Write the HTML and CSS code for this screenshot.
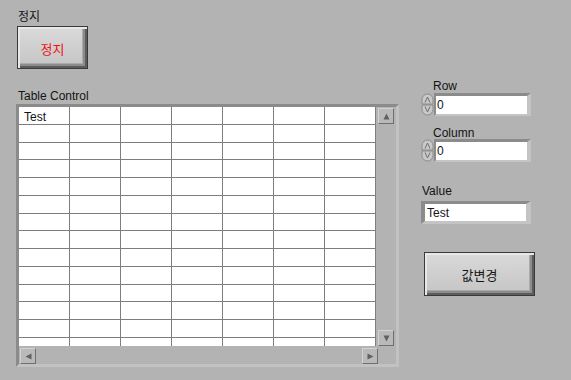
FILE: index.html
```html
<!DOCTYPE html>
<html lang="ko">
<head>
    <meta charset="UTF-8">
    <meta name="viewport" content="width=device-width, initial-scale=1.0">
    <title>Table Control</title>
    <link rel="stylesheet" href="styles.css">
</head>
<body>
    <div class="panel">
        <div class="left">
            <div class="label stop-label">정지</div>
            <button type="button" class="lv-button stop">정지</button>
            <div class="label table-label">Table Control</div>

            <div class="table-frame">
                <div class="cells">
                    <div class="cell">Test</div><div class="cell"></div><div class="cell"></div><div class="cell"></div><div class="cell"></div><div class="cell"></div><div class="cell"></div>
                    <div class="cell"></div><div class="cell"></div><div class="cell"></div><div class="cell"></div><div class="cell"></div><div class="cell"></div><div class="cell"></div>
                    <div class="cell"></div><div class="cell"></div><div class="cell"></div><div class="cell"></div><div class="cell"></div><div class="cell"></div><div class="cell"></div>
                    <div class="cell"></div><div class="cell"></div><div class="cell"></div><div class="cell"></div><div class="cell"></div><div class="cell"></div><div class="cell"></div>
                    <div class="cell"></div><div class="cell"></div><div class="cell"></div><div class="cell"></div><div class="cell"></div><div class="cell"></div><div class="cell"></div>
                    <div class="cell"></div><div class="cell"></div><div class="cell"></div><div class="cell"></div><div class="cell"></div><div class="cell"></div><div class="cell"></div>
                    <div class="cell"></div><div class="cell"></div><div class="cell"></div><div class="cell"></div><div class="cell"></div><div class="cell"></div><div class="cell"></div>
                    <div class="cell"></div><div class="cell"></div><div class="cell"></div><div class="cell"></div><div class="cell"></div><div class="cell"></div><div class="cell"></div>
                    <div class="cell"></div><div class="cell"></div><div class="cell"></div><div class="cell"></div><div class="cell"></div><div class="cell"></div><div class="cell"></div>
                    <div class="cell"></div><div class="cell"></div><div class="cell"></div><div class="cell"></div><div class="cell"></div><div class="cell"></div><div class="cell"></div>
                    <div class="cell"></div><div class="cell"></div><div class="cell"></div><div class="cell"></div><div class="cell"></div><div class="cell"></div><div class="cell"></div>
                    <div class="cell"></div><div class="cell"></div><div class="cell"></div><div class="cell"></div><div class="cell"></div><div class="cell"></div><div class="cell"></div>
                    <div class="cell"></div><div class="cell"></div><div class="cell"></div><div class="cell"></div><div class="cell"></div><div class="cell"></div><div class="cell"></div>
                    <div class="cell"></div><div class="cell"></div><div class="cell"></div><div class="cell"></div><div class="cell"></div><div class="cell"></div><div class="cell"></div>
                </div>
                <div class="vscroll">
                    <div class="sbtn">
                        <svg width="7" height="7" viewBox="0 0 7 7"><path d="M3.5 0.5 L6.5 6.5 L0.5 6.5 Z" fill="#606060"/></svg>
                    </div>
                    <div class="sbtn">
                        <svg width="7" height="7" viewBox="0 0 7 7"><path d="M0.5 0.5 L6.5 0.5 L3.5 6.5 Z" fill="#606060"/></svg>
                    </div>
                </div>
                <div class="hscroll">
                    <div class="sbtn">
                        <svg width="7" height="7" viewBox="0 0 7 7"><path d="M0.5 3.5 L6.5 0.5 L6.5 6.5 Z" fill="#606060"/></svg>
                    </div>
                    <div class="sbtn">
                        <svg width="7" height="7" viewBox="0 0 7 7"><path d="M0.5 0.5 L6.5 3.5 L0.5 6.5 Z" fill="#606060"/></svg>
                    </div>
                </div>
            </div>
        </div>

        <div class="right">
            <div class="label side-label">Row</div>
            <div class="numeric">
                <svg class="incr" width="13" height="23" viewBox="0 0 13 23">
                    <path d="M1 11 V6.5 a5.5 5.5 0 0 1 11 0 V11 Z" fill="#c8c8c8" stroke="#8a8a8a"/>
                    <path d="M1 12 V16.5 a5.5 5.5 0 0 0 11 0 V12 Z" fill="#c8c8c8" stroke="#8a8a8a"/>
                    <path d="M4 9.5 L6.5 4 L9 9.5" fill="none" stroke="#707070"/>
                    <path d="M4 13.5 L6.5 19 L9 13.5" fill="none" stroke="#707070"/>
                </svg>
                <div class="num-box">0</div>
            </div>

            <div class="label side-label column-label">Column</div>
            <div class="numeric">
                <svg class="incr" width="13" height="23" viewBox="0 0 13 23">
                    <path d="M1 11 V6.5 a5.5 5.5 0 0 1 11 0 V11 Z" fill="#c8c8c8" stroke="#8a8a8a"/>
                    <path d="M1 12 V16.5 a5.5 5.5 0 0 0 11 0 V12 Z" fill="#c8c8c8" stroke="#8a8a8a"/>
                    <path d="M4 9.5 L6.5 4 L9 9.5" fill="none" stroke="#707070"/>
                    <path d="M4 13.5 L6.5 19 L9 13.5" fill="none" stroke="#707070"/>
                </svg>
                <div class="num-box">0</div>
            </div>

            <div class="label value-label">Value</div>
            <div class="str-box">Test</div>

            <button type="button" class="lv-button change">값변경</button>
        </div>
    </div>
</body>
</html>
```

FILE: styles.css
```css
* {
    margin: 0;
    padding: 0;
    box-sizing: border-box;
    font-family: "Liberation Sans", "Noto Sans CJK KR", sans-serif;
}
body {
    background-color: #b3b3b3;
    color: #141414;
    font-size: 12px;
}
.panel {
    display: flex;
}
.left {
    padding-left: 16px;
    padding-top: 8px;
}
.label {
    line-height: 15px;
    height: 15px;
    padding-top: 2px;
}
.stop-label {
    margin-left: 2px;
}
.lv-button {
    display: flex;
    align-items: center;
    justify-content: center;
    border: 1px solid #3a3a3a;
    background: linear-gradient(#dadada, #c4c4c4);
    box-shadow: inset 2px 2px 0 #e8e8e8,
                inset -2px -2px 0 #5c5c5c,
                inset -4px -4px 0 #8c8c8c,
                inset -5px -5px 0 #aaaaaa;
    font-size: 13px;
    padding-top: 1px;
    cursor: pointer;
}
.stop {
    width: 71px;
    height: 43px;
    margin-top: 3px;
    margin-left: 1px;
    color: #f01010;
}
.table-label {
    margin-top: 18px;
    margin-left: 2px;
}
.table-frame {
    margin-top: 2px;
    width: 383px;
    height: 263px;
    display: grid;
    grid-template-columns: 357px 20px;
    grid-template-rows: 239px 18px;
    border: 3px solid;
    border-color: #8b8b8b #c2c2c2 #c2c2c2 #8b8b8b;
}
.cells {
    display: grid;
    grid-template-columns: repeat(7, 51px);
    grid-auto-rows: 17.75px;
    background-color: white;
    overflow: hidden;
}
.cell {
    border-right: 1px solid #7d7d7d;
    border-bottom: 1px solid #7d7d7d;
    padding: 3px 0 0 5px;
    line-height: 14px;
}
.vscroll {
    display: flex;
    flex-direction: column;
    justify-content: space-between;
    padding: 1px 0 0 2px;
}
.hscroll {
    grid-column: 1 / 3;
    display: flex;
    justify-content: space-between;
    padding: 2px 18px 0 1px;
}
.sbtn {
    width: 16px;
    height: 16px;
    display: flex;
    align-items: center;
    justify-content: center;
    background-color: #b9b9b9;
    border: 1px solid;
    border-color: #d2d2d2 #6f6f6f #6f6f6f #d2d2d2;
}
.right {
    margin-left: 22px;
    padding-top: 77px;
}
.side-label {
    margin-left: 12px;
    margin-bottom: 1px;
}
.column-label {
    margin-top: 8px;
    margin-bottom: 0;
}
.numeric {
    display: flex;
}
.num-box {
    width: 97px;
    height: 23px;
    background-color: white;
    border: 3px solid;
    border-width: 3px 4px 2px 2px;
    border-color: #8b8b8b #c4c4c4 #c4c4c4 #8b8b8b;
    line-height: 15px;
    padding: 2px 0 0 1px;
}
.value-label {
    margin-top: 20px;
    margin-left: 1px;
}
.str-box {
    margin-top: 4px;
    width: 110px;
    height: 23px;
    background-color: white;
    border: 3px solid;
    border-width: 3px 5px 3px 4px;
    border-color: #8b8b8b #c4c4c4 #c4c4c4 #8b8b8b;
    line-height: 15px;
    padding: 2px 0 0 2px;
}
.change {
    margin-top: 28px;
    margin-left: 3px;
    width: 111px;
    height: 44px;
    color: #141414;
}
```
